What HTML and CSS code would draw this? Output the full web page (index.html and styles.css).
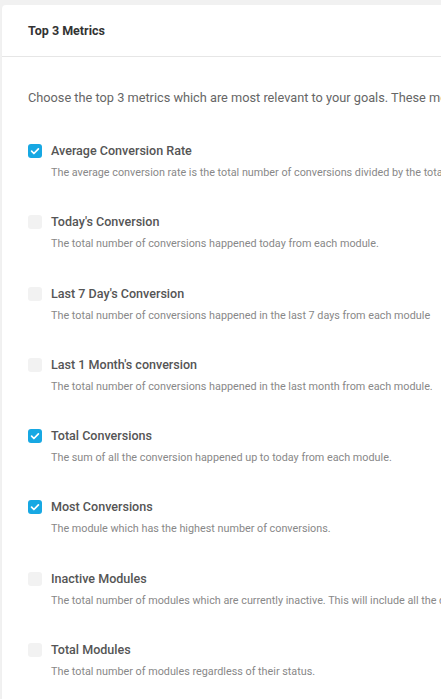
FILE: index.html
```html
<!DOCTYPE html>
<html>
<head>
    <title>Top 3 Metrics</title>
    <link rel="stylesheet" href="styles.css">
</head>
<body>
    <div class="box">
        <div class="box-header">
            <h3>Top 3 Metrics</h3>
        </div>
        <div class="box-body">
            <p class="intro">Choose the top 3 metrics which are most relevant to your goals. These metrics will be displayed on your dashboard.</p>

            <label class="metric">
                <span class="check on"></span>
                <span class="metric-text">
                    <span class="metric-name">Average Conversion Rate</span>
                    <span class="metric-desc">The average conversion rate is the total number of conversions divided by the total number of views.</span>
                </span>
            </label>
            <label class="metric">
                <span class="check"></span>
                <span class="metric-text">
                    <span class="metric-name">Today's Conversion</span>
                    <span class="metric-desc">The total number of conversions happened today from each module.</span>
                </span>
            </label>
            <label class="metric">
                <span class="check"></span>
                <span class="metric-text">
                    <span class="metric-name">Last 7 Day's Conversion</span>
                    <span class="metric-desc">The total number of conversions happened in the last 7 days from each module</span>
                </span>
            </label>
            <label class="metric">
                <span class="check"></span>
                <span class="metric-text">
                    <span class="metric-name">Last 1 Month's conversion</span>
                    <span class="metric-desc">The total number of conversions happened in the last month from each module.</span>
                </span>
            </label>
            <label class="metric">
                <span class="check on"></span>
                <span class="metric-text">
                    <span class="metric-name">Total Conversions</span>
                    <span class="metric-desc">The sum of all the conversion happened up to today from each module.</span>
                </span>
            </label>
            <label class="metric">
                <span class="check on"></span>
                <span class="metric-text">
                    <span class="metric-name">Most Conversions</span>
                    <span class="metric-desc">The module which has the highest number of conversions.</span>
                </span>
            </label>
            <label class="metric">
                <span class="check"></span>
                <span class="metric-text">
                    <span class="metric-name">Inactive Modules</span>
                    <span class="metric-desc">The total number of modules which are currently inactive. This will include all the draft modules.</span>
                </span>
            </label>
            <label class="metric">
                <span class="check"></span>
                <span class="metric-text">
                    <span class="metric-name">Total Modules</span>
                    <span class="metric-desc">The total number of modules regardless of their status.</span>
                </span>
            </label>
        </div>
    </div>
</body>
</html>
```

FILE: styles.css
```css
body {
    margin: 0;
    padding: 5px 0 0 2px;
    background-color: #f1f1f1;
    font-family: Roboto, "Liberation Sans", sans-serif;
    overflow: hidden;
}
.box {
    width: 760px;
    background-color: #fff;
    border-radius: 4px 0 0 0;
    box-shadow: 0 1px 1px rgba(0, 0, 0, 0.06);
}
.box-header {
    height: 51px;
    padding: 0 26px;
    display: flex;
    align-items: center;
    border-bottom: 1px solid #e6e6e6;
}
.box-header h3 {
    margin: 0;
    font-size: 12.5px;
    font-weight: 700;
    color: #333;
}
.box-body {
    padding: 30px 26px 20px;
}
.intro {
    margin: 0 0 33px;
    font-size: 12.75px;
    line-height: 22px;
    color: #666;
    white-space: nowrap;
}
.metric {
    display: flex;
    gap: 9px;
    margin-bottom: 31.3px;
}
.check {
    flex: none;
    width: 14px;
    height: 14px;
    margin-top: 2px;
    border-radius: 3px;
    background-color: #f2f2f2;
}
.check.on {
    background-color: #17a8e3;
    background-image: url("data:image/svg+xml,%3Csvg xmlns='http://www.w3.org/2000/svg' viewBox='0 0 14 14'%3E%3Cpath d='M3.6 7.2l2.3 2.3 4.5-4.6' fill='none' stroke='%23fff' stroke-width='1.7' stroke-linecap='round' stroke-linejoin='round'/%3E%3C/svg%3E");
}
.metric-text {
    display: flex;
    flex-direction: column;
    gap: 4px;
}
.metric-name {
    font-size: 12.55px;
    line-height: 18px;
    font-weight: 500;
    color: #555;
}
.metric-desc {
    font-size: 10.8px;
    line-height: 18px;
    color: #888;
    white-space: nowrap;
}
```
